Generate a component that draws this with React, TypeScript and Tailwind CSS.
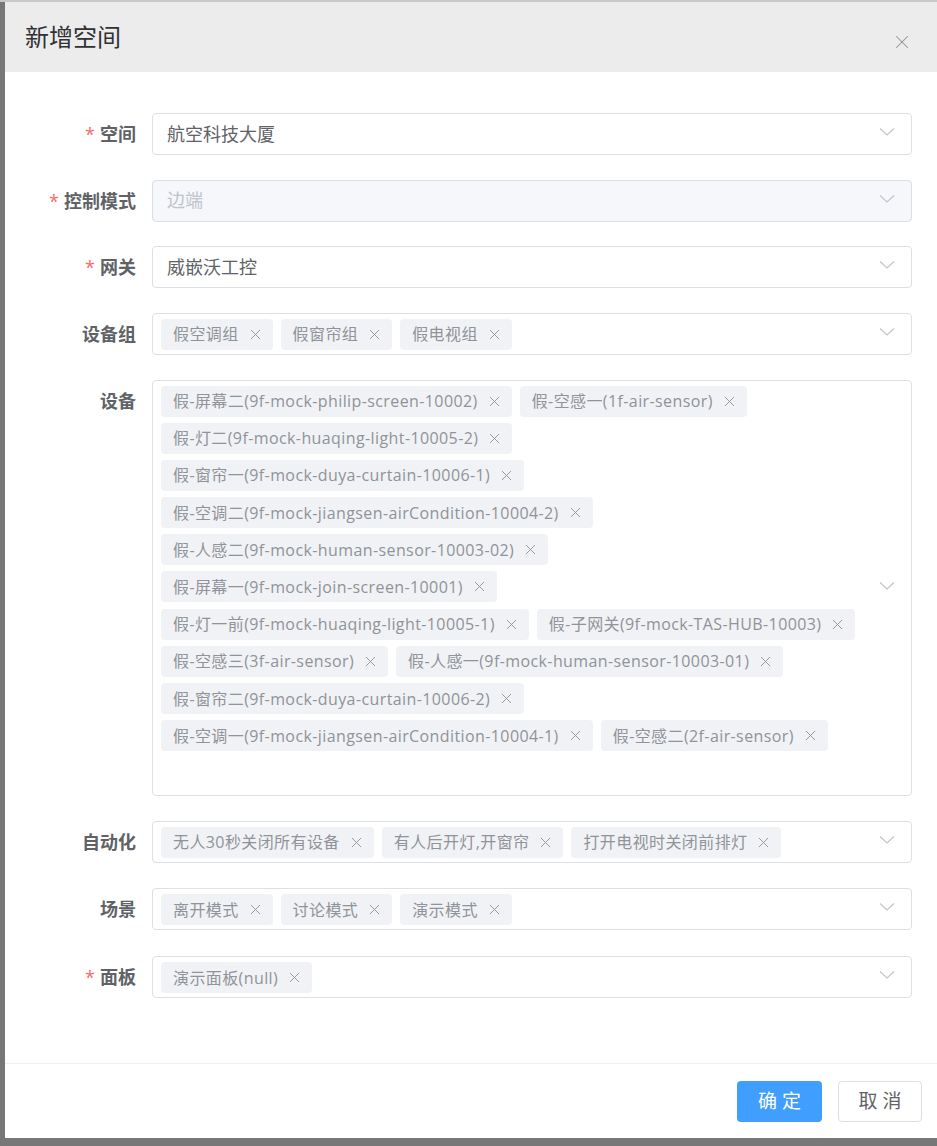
import { X } from 'lucide-react';

const font = { fontFamily: '"Open Sans", "Noto Sans CJK SC", sans-serif' };

const deviceRows = [
  ['假-屏幕二(9f-mock-philip-screen-10002)', '假-空感一(1f-air-sensor)'],
  ['假-灯二(9f-mock-huaqing-light-10005-2)'],
  ['假-窗帘一(9f-mock-duya-curtain-10006-1)'],
  ['假-空调二(9f-mock-jiangsen-airCondition-10004-2)'],
  ['假-人感二(9f-mock-human-sensor-10003-02)'],
  ['假-屏幕一(9f-mock-join-screen-10001)'],
  ['假-灯一前(9f-mock-huaqing-light-10005-1)', '假-子网关(9f-mock-TAS-HUB-10003)'],
  ['假-空感三(3f-air-sensor)', '假-人感一(9f-mock-human-sensor-10003-01)'],
  ['假-窗帘二(9f-mock-duya-curtain-10006-2)'],
  ['假-空调一(9f-mock-jiangsen-airCondition-10004-1)', '假-空感二(2f-air-sensor)'],
];

function Tag({ label }) {
  return (
    <span className="flex items-center h-[31px] rounded bg-[#f0f2f5] pl-3 pr-[9px] text-[16px] tracking-[0.4px] text-[#909399] whitespace-nowrap">
      {label}
      <X className="ml-[8px] w-[17px] h-[17px] text-[#909399]" strokeWidth={1.3} />
    </span>
  );
}

function Chevron() {
  return (
    <svg className="absolute right-[16px] top-[13px]" width="16" height="10" viewBox="0 0 16 10">
      <path d="M1 1.5 L8 8 L15 1.5" fill="none" stroke="#c0c4cc" strokeWidth="1.2" />
    </svg>
  );
}

function Label({ text, required }) {
  return (
    <div className="w-[131px] shrink-0 text-right h-[42px] leading-[42px] text-[18px] font-bold text-[#606266]">
      {required && <span className="text-[#f56c6c] mr-[5px] font-normal">*</span>}
      {text}
    </div>
  );
}

function Field({ label, required, children, disabled, multi, tall, gap }) {
  return (
    <div className={`flex ${gap}`}>
      <Label text={label} required={required} />
      <div
        className={`relative ml-[16px] w-[760px] rounded border border-[#dcdfe6] ${
          disabled ? 'bg-[#f5f7fa]' : 'bg-white'
        } ${tall ? 'h-[416px]' : 'h-[42px]'}`}
      >
        {multi ? (
          <div className="pl-[8px] pr-[40px] pt-[5px] flex flex-col gap-[6.2px]">{children}</div>
        ) : (
          <div className={`pl-[14px] h-full flex items-center text-[18px] ${disabled ? 'text-[#c0c4cc]' : 'text-[#606266]'}`}>
            {children}
          </div>
        )}
        <div className={tall ? 'absolute right-0 top-[187px] w-0 h-0' : ''}>
          <Chevron />
        </div>
      </div>
    </div>
  );
}

function TagRow({ items }) {
  return (
    <div className="flex gap-[8px]">
      {items.map((t) => (
        <Tag key={t} label={t} />
      ))}
    </div>
  );
}

export default function App() {
  return (
    <div className="w-[937px] h-[1146px] bg-[#777777] overflow-hidden" style={font}>
      <div className="h-[2px] bg-[#c8c8c8]" />
      <div className="ml-[5px] w-[932px] h-[1136px] bg-white flex flex-col">
        <div className="h-[70px] bg-[#ececec] flex items-center justify-between pl-[20px] pr-[24px]">
          <span className="text-[24px] text-[#303133]">新增空间</span>
          <X className="w-[22px] h-[22px] text-[#909399] mt-[10px]" strokeWidth={1.1} />
        </div>

        <div className="pt-[41px]">
          <Field label="空间" required gap="mb-[24.5px]">航空科技大厦</Field>
          <Field label="控制模式" required disabled gap="mb-[24.5px]">边端</Field>
          <Field label="网关" required gap="mb-[24.5px]">威嵌沃工控</Field>
          <Field label="设备组" multi gap="mb-[25px]">
            <TagRow items={['假空调组', '假窗帘组', '假电视组']} />
          </Field>
          <Field label="设备" multi tall gap="mb-[25px]">
            {deviceRows.map((row, i) => (
              <TagRow key={i} items={row} />
            ))}
          </Field>
          <Field label="自动化" multi gap="mb-[25.5px]">
            <TagRow items={['无人30秒关闭所有设备', '有人后开灯,开窗帘', '打开电视时关闭前排灯']} />
          </Field>
          <Field label="场景" multi gap="mb-[26px]">
            <TagRow items={['离开模式', '讨论模式', '演示模式']} />
          </Field>
          <Field label="面板" required multi gap="">
            <TagRow items={['演示面板(null)']} />
          </Field>
        </div>

        <div className="mt-auto border-t border-[#f0f0f0] h-[75px] flex items-center justify-end gap-[16px] pr-[15px]">
          <button className="h-[41px] w-[85px] rounded bg-[#409eff] text-white text-[19px] tracking-[5px] pl-[5px]">
            确定
          </button>
          <button className="h-[41px] w-[84px] rounded border border-[#dcdfe6] bg-white text-[#606266] text-[19px] tracking-[5px] pl-[5px]">
            取消
          </button>
        </div>
      </div>
    </div>
  );
}
